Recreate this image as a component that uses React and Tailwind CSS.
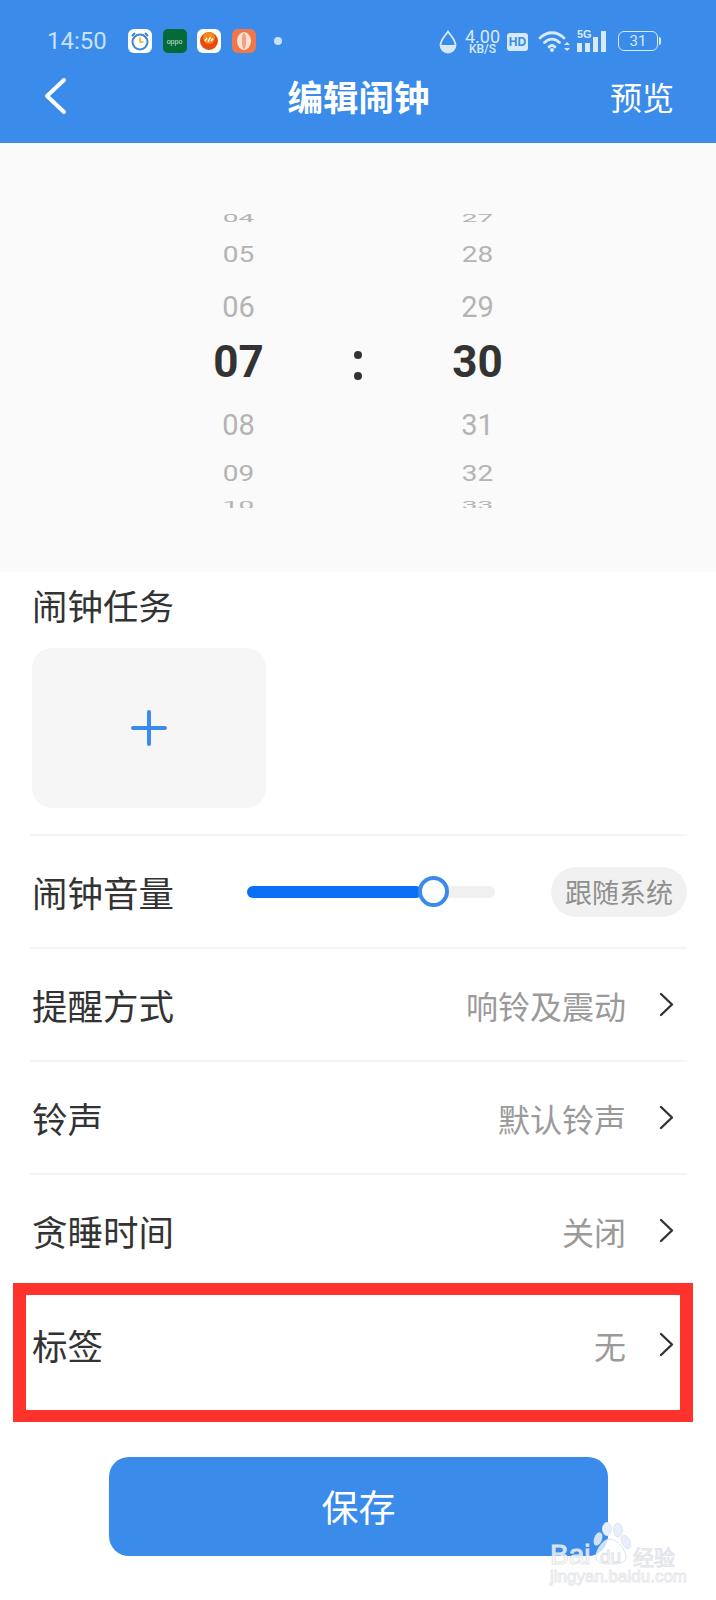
const CJK = "font-['Noto_Sans_CJK_SC','Noto_Sans',sans-serif]";

function Wheel({ items }) {
  const rows = [
    ['h-[14px]', 'text-[28px] scale-y-[0.4]'],
    ['h-[60px]', 'text-[28px] scale-y-[0.8]'],
    ['h-[44px]', 'text-[29px]'],
    ['h-[66px]', 'text-[44px] font-bold text-[#333333]'],
    ['h-[60px]', 'text-[29px]'],
    ['h-[38px]', 'text-[28px] scale-y-[0.8]'],
  ];
  return (
    <div className="w-[60px] flex flex-col items-center text-[#b4b4b4] font-['Roboto',sans-serif]">
      {rows.map(([h, t], i) => (
        <div key={i} className={`${h} flex items-center justify-center`}>
          <span className={`block leading-none ${t}`}>{items[i]}</span>
        </div>
      ))}
      <div className="mt-[7px] h-[8px] overflow-hidden">
        <span className="block leading-none text-[28px] scale-y-[0.4] origin-top">{items[6]}</span>
      </div>
    </div>
  );
}

function Chevron({ className }) {
  return (
    <svg width="15" height="25" viewBox="0 0 15 25" className={className} fill="none">
      <path d="M2 2 L13 12.5 L2 23" stroke="#333" strokeWidth="2.4" strokeLinecap="round" strokeLinejoin="round" />
    </svg>
  );
}

function Row({ label, value, last }) {
  return (
    <div className={`h-[113px] flex items-center pl-[2px] pr-[13px] ${last ? '' : 'border-b-2 border-[#f4f4f4]'}`}>
      <span className="text-[35.5px] leading-none text-[#333333] mt-[1px]">{label}</span>
      <span className="ml-auto text-[32px] leading-none text-[#9a9a9a]">{value}</span>
      <Chevron className="ml-[33px] mt-[-1px]" />
    </div>
  );
}

function StatusBar() {
  return (
    <div className="h-[66px] pt-[29px] pl-[47px] pr-[55px] flex items-start text-[#c4e2fb]">
      <span className="text-[24px] leading-[24px] font-['Roboto',sans-serif] w-[81px]">14:50</span>
      <div className="flex gap-[10.5px]">
        <svg width="24" height="24" viewBox="0 0 24 24">
          <rect width="24" height="24" rx="6" fill="#fff" />
          <circle cx="12" cy="13" r="7.5" fill="#fff" stroke="#3f86d6" strokeWidth="2" />
          <path d="M12 8.5 V13 H15.5" stroke="#e9b32c" strokeWidth="1.6" fill="none" />
          <path d="M4 7 L7 4 M20 7 L17 4" stroke="#3f86d6" strokeWidth="2" />
        </svg>
        <div className="w-[24px] h-[24px] rounded-[5px] bg-[#046a38] flex items-center justify-center text-[7px] leading-none text-[#cfe8d8] font-['Liberation_Sans',sans-serif]">oppo</div>
        <svg width="24" height="24" viewBox="0 0 24 24">
          <rect width="24" height="24" rx="6" fill="#fff" />
          <circle cx="12" cy="12" r="9" fill="#e8490f" />
          <circle cx="12" cy="9" r="6" fill="#f28a1c" />
          <path d="M8 12 L10 9 M11 13 L13.5 8 M14 12 L16 9.5" stroke="#fff" strokeWidth="1.4" />
        </svg>
        <svg width="24" height="24" viewBox="0 0 24 24">
          <rect width="24" height="24" rx="6" fill="#f0774a" />
          <ellipse cx="12" cy="12" rx="7" ry="9" fill="#fde3d6" />
          <ellipse cx="12" cy="12" rx="2.2" ry="8" fill="#f3a27f" />
        </svg>
      </div>
      <span className="ml-[18px] mt-[8px] w-[8px] h-[8px] rounded-full bg-[#c4e2fb]" />
      <div className="ml-auto flex items-start">
        <svg width="18" height="24" viewBox="0 0 18 24" className="mt-[1px]">
          <path d="M9 1.5 C12 6 16.5 10 16.5 15 A7.5 7.5 0 0 1 1.5 15 C1.5 10 6 6 9 1.5 Z" fill="none" stroke="#d6eafb" strokeWidth="1.8" />
          <path d="M1.8 15 H16.2 A7.2 7.2 0 0 1 1.8 15 Z" fill="#d6eafb" />
        </svg>
        <div className="ml-[7px] w-[37px] flex flex-col items-center font-['Roboto',sans-serif] text-[#d6eafb]">
          <span className="text-[18px] leading-[15px]">4.00</span>
          <span className="text-[12px] leading-[10px] font-medium">KB/S</span>
        </div>
        <div className="ml-[6px] mt-[4px] w-[21px] h-[18px] rounded-[3px] bg-[#d6eafb] flex items-center justify-center text-[12px] leading-none font-bold text-[#3b8bea] font-['Liberation_Sans',sans-serif]">HD</div>
        <svg width="32" height="24" viewBox="0 0 32 24" className="ml-[10px]">
          <g fill="none" stroke="#d6eafb" strokeWidth="2.8" strokeLinecap="round">
            <path d="M2 9 C9 2 19 2 26 9" />
            <path d="M6.5 13.5 C11 9 17 9 21.5 13.5" />
            <path d="M11 18 C13 16 15 16 17 18" />
          </g>
          <circle cx="14" cy="21" r="2" fill="#d6eafb" />
          <path d="M26 16 L29 13 L32 16 Z M26 19 L29 22 L32 19 Z" fill="#d6eafb" />
        </svg>
        <div className="ml-[7px] w-[31px] h-[24px] relative">
          <span className="absolute left-0 top-0 text-[11px] leading-[11px] font-bold text-[#d6eafb] font-['Liberation_Sans',sans-serif]">5G</span>
          <div className="absolute bottom-[1px] left-0 flex items-end gap-[3px]">
            <span className="block w-[5px] h-[9px] bg-[#d6eafb]" />
            <span className="block w-[5px] h-[9px] bg-[#d6eafb]" />
            <span className="block w-[5px] h-[15px] bg-[#d6eafb]" />
            <span className="block w-[5px] h-[21px] bg-[#d6eafb]" />
          </div>
        </div>
        <div className="ml-[10px] mt-[2px] flex items-center">
          <div className="w-[40px] h-[20px] rounded-[6px] border border-[#d6eafb] flex items-center justify-center text-[15px] leading-none text-[#d6eafb] font-['Roboto',sans-serif]">31</div>
          <span className="ml-[1px] w-[2px] h-[8px] rounded-r bg-[#d6eafb]" />
        </div>
      </div>
    </div>
  );
}

function Watermark() {
  return (
    <div className="absolute left-[548px] top-[1522px] w-[135px] h-[64px] font-['Liberation_Sans',sans-serif] pointer-events-none">
      <svg width="135" height="44" viewBox="0 0 135 44" className="absolute left-0 top-0">
        <ellipse cx="50" cy="17" rx="4" ry="7" transform="rotate(20 50 17)" fill="#cfe2f8" />
        <g fill="#e6effa" stroke="#dfe6ee" strokeWidth="1">
          <ellipse cx="59" cy="7" rx="4.5" ry="6.5" />
          <ellipse cx="70" cy="8" rx="4.5" ry="7" />
          <ellipse cx="78" cy="20" rx="4" ry="7" transform="rotate(-25 78 20)" />
        </g>
        <path d="M62 17 C70 18 78 28 78 35 C78 42 68 42 62 42 C56 42 48 41 48 35 C48 28 55 17 62 17 Z" fill="#ffffff" fillOpacity="0.75" stroke="#dfe3e8" />
      </svg>
      <span className="absolute left-[2px] top-[19px] text-[28px] leading-[28px] font-normal text-white/75 [-webkit-text-stroke:1px_#dfe3e8]">Bai</span>
      <span className="absolute left-[52px] top-[25px] text-[19px] leading-[19px] text-white/60 [-webkit-text-stroke:1px_#dfe3e8]">du</span>
      <span className={`absolute left-[85px] top-[24px] text-[21px] leading-[21px] text-[#f4f5f7] [-webkit-text-stroke:1px_#e2e5e9] ${CJK}`}>经验</span>
      <span className="absolute left-[2px] top-[47px] text-[17px] leading-[16px] text-white/60 [-webkit-text-stroke:1px_#e6e8eb] whitespace-nowrap">jingyan.baidu.com</span>
    </div>
  );
}

export default function App() {
  return (
    <div className={`relative w-[716px] h-[1600px] bg-white overflow-hidden ${CJK}`}>
      <header className="h-[143px] bg-[#3b8bea]">
        <StatusBar />
        <div className="h-[60px] px-[43px] flex items-center justify-between text-white">
          <div className="w-[100px]">
            <svg width="24" height="38" viewBox="0 0 24 38" fill="none">
              <path d="M21 3 L4 19 L21 35" stroke="#fff" strokeWidth="4" strokeLinecap="round" strokeLinejoin="round" />
            </svg>
          </div>
          <span className="text-[35.5px] leading-none font-bold">编辑闹钟</span>
          <span className="w-[100px] text-right text-[32px] leading-none mr-[-1px]">预览</span>
        </div>
      </header>

      <section className="h-[429px] bg-[#fafafa] pt-[68px] flex justify-center">
        <Wheel items={['04', '05', '06', '07', '08', '09', '10']} />
        <div className="w-[179px] pt-[118px]">
          <div className="h-[66px] pt-[6px] flex flex-col items-center justify-center gap-[13px]">
            <span className="block w-[8px] h-[8px] rounded-full bg-[#333333]" />
            <span className="block w-[8px] h-[8px] rounded-full bg-[#333333]" />
          </div>
        </div>
        <Wheel items={['27', '28', '29', '30', '31', '32', '33']} />
      </section>

      <section className="ml-[30px] w-[657px]">
        <div className="h-[264px] border-b-2 border-[#f4f4f4] pl-[2px] pt-[15px]">
          <div className="text-[35.5px] leading-[36px] text-[#333333]">闹钟任务</div>
          <div className="mt-[25px] w-[234px] h-[160px] rounded-[20px] bg-[#f6f6f6] flex items-center justify-center">
            <svg width="36" height="36" viewBox="0 0 36 36" fill="none">
              <path d="M18 2 V34 M2 18 H34" stroke="#3b8bea" strokeWidth="4" strokeLinecap="round" />
            </svg>
          </div>
        </div>

        <div className="h-[113px] flex items-center pl-[2px] border-b-2 border-[#f4f4f4]">
          <span className="text-[35.5px] leading-none text-[#333333] w-[215px]">闹钟音量</span>
          <div className="relative w-[248px] h-[12px] rounded-full bg-[#f0f0f0]">
            <div className="h-full w-[175px] rounded-full bg-[#0a6ff0]" />
            <div className="absolute left-[171px] top-[-10px] w-[31px] h-[31px] rounded-full bg-white border-4 border-[#3b8bea]" />
          </div>
          <div className="ml-auto w-[136px] h-[50px] rounded-full bg-[#f1f1f1] flex items-center justify-center text-[27px] leading-none text-[#8f8f8f]">跟随系统</div>
        </div>

        <Row label="提醒方式" value="响铃及震动" />
        <Row label="铃声" value="默认铃声" />
        <Row label="贪睡时间" value="关闭" />
        <Row label="标签" value="无" last />
      </section>

      <div className="mt-[56px] ml-[109px] w-[499px] h-[99px] rounded-[20px] bg-[#3b8bea] flex items-center justify-center text-[37px] leading-none text-white">保存</div>

      <div className="absolute left-[13px] top-[1283px] w-[680px] h-[139px] border-x-[13px] border-y-[12px] border-[#ff332b]" />
      <Watermark />
    </div>
  );
}
